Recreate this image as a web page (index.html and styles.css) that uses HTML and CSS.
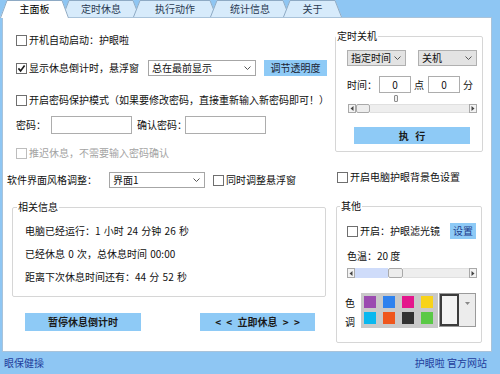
FILE: index.html
```html
<!DOCTYPE html>
<html lang="zh-CN">
<head>
<meta charset="utf-8">
<title>护眼啦</title>
<link rel="stylesheet" href="styles.css">
</head>
<body>
<div class="window">
  <div class="tabs">
    <div class="tab t1">
      <svg width="69" height="18" viewBox="0 0 69 18"><polygon points="0,18 7,0 62,0 69,18" fill="#fff"/><polyline points="0.5,18 7,0.5 62,0.5 68.5,18" fill="none" stroke="#8eaac4"/></svg>
      <span>主面板</span>
    </div>
    <div class="tab t2">
      <svg width="78" height="17" viewBox="0 0 78 17"><polygon points="0,17 7,0 71,0 78,17" fill="#d7ebfb"/><polyline points="0.5,17 7,0.5 71,0.5 77.5,17" fill="none" stroke="#8eaac4"/></svg>
      <span>定时休息</span>
    </div>
    <div class="tab t3">
      <svg width="84" height="17" viewBox="0 0 84 17"><polygon points="0,17 7,0 77,0 84,17" fill="#d7ebfb"/><polyline points="0.5,17 7,0.5 77,0.5 83.5,17" fill="none" stroke="#8eaac4"/></svg>
      <span>执行动作</span>
    </div>
    <div class="tab t4">
      <svg width="80" height="17" viewBox="0 0 80 17"><polygon points="0,17 7,0 73,0 80,17" fill="#d7ebfb"/><polyline points="0.5,17 7,0.5 73,0.5 79.5,17" fill="none" stroke="#8eaac4"/></svg>
      <span>统计信息</span>
    </div>
    <div class="tab t5">
      <svg width="59" height="17" viewBox="0 0 59 17"><polygon points="0,17 7,0 52,0 59,17" fill="#d7ebfb"/><polyline points="0.5,17 7,0.5 52,0.5 58.5,17" fill="none" stroke="#8eaac4"/></svg>
      <span>关于</span>
    </div>
  </div>

  <div class="panel">
    <div class="left">
      <div class="row r1">
        <span class="cb"></span><span>开机自动启动：护眼啦</span>
      </div>
      <div class="row r2">
        <div class="lbl-float"><span class="cb"><svg width="9" height="9" viewBox="0 0 9 9"><path d="M1.4 4.4 L3.6 6.9 L7.6 1.6" stroke="#1a1a1a" stroke-width="1.6" fill="none"/></svg></span><span>显示休息倒计时，悬浮窗</span></div>
        <div class="select sel-top"><span>总在最前显示</span><svg width="7" height="4" viewBox="0 0 7 4"><path d="M0.5 0.5 L3.5 3.5 L6.5 0.5" stroke="#555" fill="none"/></svg></div>
        <div class="btn btn-alpha">调节透明度</div>
      </div>
      <div class="row r3">
        <span class="cb"></span><span>开启密码保护模式（如果要修改密码，直接重新输入新密码即可！）</span>
      </div>
      <div class="row r4">
        <span class="lbl-pw">密码：</span><span class="input in-pw"></span>
        <span class="lbl-pw2">确认密码：</span><span class="input in-pw"></span>
      </div>
      <div class="row r5 disabled">
        <span class="cb"></span><span>推迟休息，不需要输入密码确认</span>
      </div>
      <div class="row r6">
        <span class="lbl-style">软件界面风格调整：</span>
        <div class="select sel-style"><span>界面1</span><svg width="7" height="4" viewBox="0 0 7 4"><path d="M0.5 0.5 L3.5 3.5 L6.5 0.5" stroke="#555" fill="none"/></svg></div>
        <span class="cb cb-sync"></span><span>同时调整悬浮窗</span>
      </div>
      <fieldset class="group info">
        <legend>相关信息</legend>
        <div class="info-line">电脑已经运行：1 小时 24 分钟 26 秒</div>
        <div class="info-line">已经休息 0 次，总休息时间 00:00</div>
        <div class="info-line">距离下次休息时间还有：44 分 52 秒</div>
      </fieldset>
      <div class="row actions">
        <div class="btn btn-bold btn-pause">暂停休息倒计时</div>
        <div class="btn btn-bold btn-rest">&lt; &lt; 立即休息 &gt; &gt;</div>
      </div>
    </div>

    <div class="right">
      <fieldset class="group shutdown">
        <legend>定时关机</legend>
        <div class="row sd-selects">
          <div class="select gray sel-mode"><span>指定时间</span><svg width="7" height="4" viewBox="0 0 7 4"><path d="M0.5 0.5 L3.5 3.5 L6.5 0.5" stroke="#555" fill="none"/></svg></div>
          <div class="select gray sel-act"><span>关机</span><svg width="7" height="4" viewBox="0 0 7 4"><path d="M0.5 0.5 L3.5 3.5 L6.5 0.5" stroke="#555" fill="none"/></svg></div>
        </div>
        <div class="row sd-time">
          <span class="lbl-time">时间：</span>
          <span class="input in-num">0</span>
          <span class="unit">点</span>
          <span class="input in-num">0</span>
          <span class="unit">分</span>
        </div>
        <div class="tick"></div>
        <div class="scroll sd-scroll">
          <span class="sb-btn"><svg width="4" height="5" viewBox="0 0 4 5"><path d="M3.5 0 L0.5 2.5 L3.5 5 Z" fill="#444"/></svg></span>
          <span class="sb-thumb"></span>
          <span class="sb-track"></span>
          <span class="sb-btn"><svg width="4" height="5" viewBox="0 0 4 5"><path d="M0.5 0 L3.5 2.5 L0.5 5 Z" fill="#444"/></svg></span>
        </div>
        <div class="btn btn-bold btn-exec">执 行</div>
      </fieldset>

      <div class="row bg-row">
        <span class="cb"></span><span>开启电脑护眼背景色设置</span>
      </div>

      <fieldset class="group other">
        <legend>其他</legend>
        <div class="row filter-row">
          <span class="cb"></span><span>开启：护眼滤光镜</span>
          <div class="btn btn-set">设置</div>
        </div>
        <div class="temp">色温：20 度</div>
        <div class="scroll temp-scroll">
          <span class="sb-btn"><svg width="4" height="5" viewBox="0 0 4 5"><path d="M3.5 0 L0.5 2.5 L3.5 5 Z" fill="#444"/></svg></span>
          <span class="sb-fill"></span>
          <span class="sb-thumb"></span>
          <span class="sb-track"></span>
          <span class="sb-btn"><svg width="4" height="5" viewBox="0 0 4 5"><path d="M0.5 0 L3.5 2.5 L0.5 5 Z" fill="#444"/></svg></span>
        </div>
        <div class="row tone-row">
          <div class="tone-lbl"><span>色</span><span>调</span></div>
          <div class="palette">
            <span class="sw" style="background:#9b4bb0"></span>
            <span class="sw" style="background:#2f82ee"></span>
            <span class="sw" style="background:#e4168c"></span>
            <span class="sw" style="background:#f8d31a"></span>
            <span class="sw" style="background:#0ab8ef"></span>
            <span class="sw" style="background:#ef561c"></span>
            <span class="sw" style="background:#323232"></span>
            <span class="sw" style="background:#5ac946"></span>
          </div>
          <div class="color-pick">
            <span class="cp-swatch"></span>
            <span class="cp-arrow"><svg width="5" height="3" viewBox="0 0 5 3"><path d="M0 0 L5 0 L2.5 3 Z" fill="#888"/></svg></span>
          </div>
        </div>
      </fieldset>
    </div>
  </div>

  <div class="status">
    <span>眼保健操</span>
    <span>护眼啦 官方网站</span>
  </div>
</div>
</body>
</html>
```

FILE: styles.css
```css
* { box-sizing: border-box; }
html, body { margin: 0; padding: 0; }
body {
  width: 500px;
  height: 374px;
  overflow: hidden;
  background: #8ec6f3;
  font-family: "Noto Sans CJK SC", "Noto Sans", sans-serif;
  font-size: 10px;
  line-height: 12px;
  color: #0f0f0f;
}
.window { display: flex; flex-direction: column; height: 374px; }

/* tabs */
.tabs { display: flex; height: 17px; position: relative; z-index: 2; }
.tab {
  position: relative;
  flex: none;
  height: 17px;
  margin-left: -7px;
  text-align: center;
  line-height: 17px;
  color: #2a3a52;
}
.tab svg { position: absolute; left: 0; top: 0; }
.tab span { position: relative; }
.t1 { width: 69px; height: 18px; margin-left: 0; z-index: 10; color: #000; }
.t2 { width: 78px; z-index: 2; }
.t3 { width: 84px; z-index: 3; }
.t4 { width: 80px; z-index: 4; }
.t5 { width: 59px; z-index: 5; }

/* panel */
.panel {
  margin-left: 2px;
  width: 490px;
  height: 335px;
  border: 1px solid #a9c3da;
  background: #fff;
  display: flex;
  position: relative;
  z-index: 1;
}
.left { width: 332px; flex: none; padding-top: 13px; }
.right { width: 156px; flex: none; }

.row { display: flex; align-items: center; height: 18px; white-space: nowrap; }

.cb {
  flex: none;
  width: 11px;
  height: 11px;
  border: 1px solid #6f6f6f;
  background: #fff;
  margin-right: 2px;
  display: flex;
  align-items: center;
  justify-content: center;
}
.disabled { color: #a3a3a3; }
.disabled .cb { border-color: #bdbdbd; }

.r1 { margin-left: 13px; }
.r2 { margin-left: 13px; margin-top: 10px; }
.r3 { margin-left: 13px; margin-top: 14px; }
.r4 { margin-left: 13px; margin-top: 7px; }
.r5 { margin-left: 13px; margin-top: 10px; }
.r6 { margin-left: 4px; margin-top: 9px; }

.lbl-float { display: flex; align-items: center; width: 132px; flex: none; }

.select {
  display: flex;
  align-items: center;
  justify-content: space-between;
  height: 16px;
  border: 1px solid #a6a6a6;
  background: #fff;
  padding: 0 4px 0 3px;
  flex: none;
}
.select.gray { background: #e3e3e3; border-color: #b0b0b0; }
.sel-top { width: 108px; }
.btn {
  display: flex;
  align-items: center;
  justify-content: center;
  background: #8ecaf6;
  color: #1c2433;
  flex: none;
  white-space: pre;
}
.btn-bold { font-weight: bold; color: #1a1a1a; }
.btn-alpha { width: 63px; height: 16px; margin-left: 8px; }

.input {
  display: flex;
  align-items: center;
  justify-content: center;
  height: 18px;
  border: 1px solid #adadad;
  background: #fff;
  flex: none;
}
.lbl-pw { width: 35px; flex: none; }
.in-pw { width: 81px; }
.lbl-pw2 { width: 48px; flex: none; margin-left: 5px; }

.lbl-style { width: 102px; flex: none; }
.sel-style { width: 96px; }
.cb-sync { margin-left: 8px; }

/* group boxes */
.group {
  margin: 0;
  border: 1px solid #d6d6d6;
  border-radius: 2px;
  min-width: 0;
}
.group legend { padding: 0 1px; line-height: 12px; }

.info { margin: 12px 0 0 9px; width: 314px; padding: 6px 0 8px 12px; }
.info legend { margin-left: -8px; }
.info-line { line-height: 23px; word-spacing: 1px; }

.actions { margin-top: 16px; height: 18px; }
.btn-pause { width: 116px; height: 18px; margin-left: 22px; }
.btn-rest { width: 115px; height: 18px; margin-left: 59px; word-spacing: 3px; }

/* right column */
.shutdown { margin-top: 12px; width: 148px; padding: 8px 0 7px 11px; }
.shutdown legend { margin-left: -11px; }
.sd-selects { height: 16px; }
.sel-mode { width: 59px; }
.sel-act { width: 59px; margin-left: 12px; }
.sd-time { height: 17px; margin-top: 10px; }
.lbl-time { width: 32px; flex: none; }
.in-num { width: 32px; height: 17px; }
.unit { margin: 0 4px 0 3px; }
.tick {
  width: 4px;
  height: 7px;
  margin: 2px 0 0 47px;
  border: 1px solid #8d8d8d;
  border-radius: 1px;
  background: #f0f0f0;
}

.scroll { display: flex; height: 9px; }
.sd-scroll { width: 129px; margin: 2px 0 0 1px; }
.sb-btn {
  flex: none;
  width: 8px;
  height: 9px;
  border: 1px solid #a9a9a9;
  background: #f3f3f3;
  display: flex;
  align-items: center;
  justify-content: center;
}
.sb-thumb {
  flex: none;
  width: 14px;
  height: 9px;
  border: 1px solid #a9a9a9;
  border-radius: 2px;
  background: #ededed;
}
.sb-track { flex: 1; background: #eeeeee; border-top: 1px solid #e0e0e0; border-bottom: 1px solid #e0e0e0; }
.sb-fill { flex: none; width: 33px; background: #cfdcfa; }

.btn-exec { width: 116px; height: 17px; margin: 14px 0 0 7px; word-spacing: 4px; }

.bg-row { margin: 16px 0 0 2px; }

.other { margin: 14px 0 0 1px; width: 146px; padding: 10px 5px 14px 10px; }
.other legend { margin-left: -7px; }
.filter-row { height: 18px; }
.btn-set { width: 26px; height: 16px; margin-left: auto; color: #1d3a8a; }
.temp { margin-top: 8px; line-height: 16px; }
.temp-scroll { width: 130px; height: 10px; margin-top: 4px; }
.temp-scroll .sb-btn, .temp-scroll .sb-thumb { height: 10px; }
.temp-scroll .sb-thumb { width: 15px; }

.tone-row { height: 35px; margin-top: 15px; align-items: flex-start; }
.tone-lbl {
  width: 14px;
  flex: none;
  margin-left: -2px;
  margin-right: 2px;
  display: flex;
  flex-direction: column;
  line-height: 19px;
}
.palette {
  flex: none;
  width: 77px;
  height: 35px;
  background: #c9c9c9;
  display: grid;
  grid-template-columns: repeat(4, 12px);
  grid-auto-rows: 12px;
  column-gap: 7px;
  row-gap: 4px;
  padding: 3px 0 0 3px;
}
.sw { display: block; }
.color-pick {
  flex: none;
  width: 37px;
  height: 34px;
  margin-left: 1px;
  border: 1px solid #9a9a9a;
  background: #ececec;
  display: flex;
}
.cp-swatch { width: 19px; height: 32px; border: 2px solid #3c3c3c; background: #f3f3f3; }
.cp-arrow { flex: 1; display: flex; align-items: flex-start; justify-content: center; padding-top: 8px; }

/* status bar */
.status {
  height: 22px;
  display: flex;
  align-items: center;
  justify-content: space-between;
  padding: 0 13px 0 4px;
  color: #1f3d9c;
}
```
